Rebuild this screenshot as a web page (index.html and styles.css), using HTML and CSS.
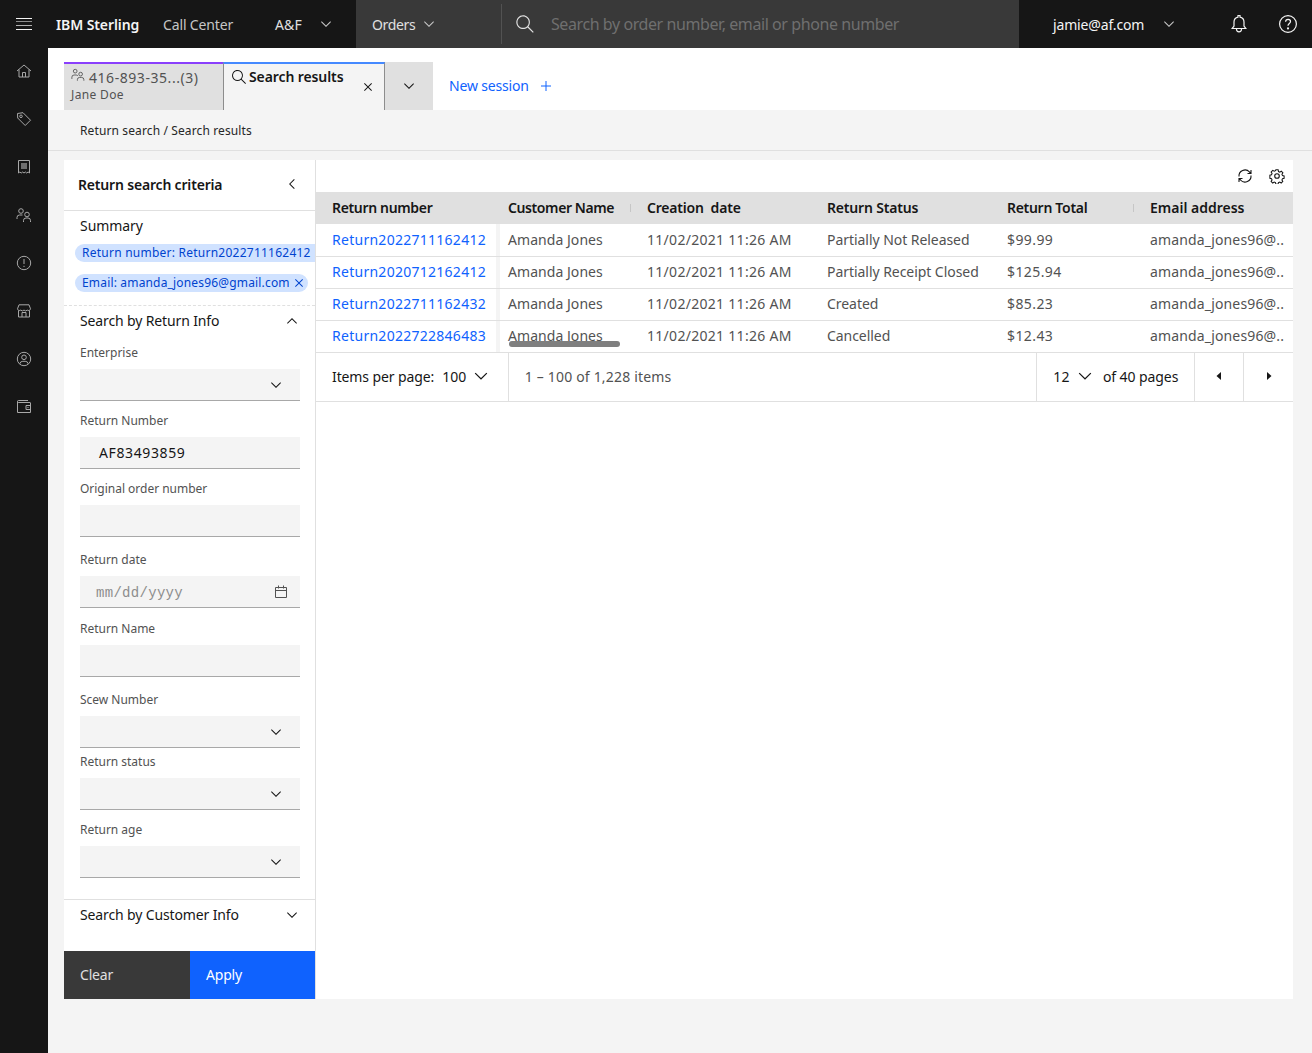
FILE: index.html
```html
<!DOCTYPE html>
<html lang="en">
<head>
<meta charset="utf-8">
<title>IBM Sterling Call Center</title>
<link rel="stylesheet" href="styles.css">
</head>
<body>
<svg class="defs" width="0" height="0" aria-hidden="true">
  <symbol id="chev" viewBox="0 0 16 16"><path d="M8 11L3 6 3.7 5.3 8 9.6 12.3 5.3 13 6z"/></symbol>
  <symbol id="close" viewBox="0 0 16 16"><path d="M12 4.7L11.3 4 8 7.3 4.7 4 4 4.7 7.3 8 4 11.3 4.7 12 8 8.7 11.3 12 12 11.3 8.7 8z"/></symbol>
  <symbol id="search" viewBox="0 0 16 16"><path d="M15,14.3L10.7,10c1.9-2.3,1.6-5.8-0.7-7.7S4.2,0.7,2.3,3S0.7,8.8,3,10.7c2,1.7,5,1.7,7,0l4.3,4.3L15,14.3z M2,6.5 C2,4,4,2,6.5,2S11,4,11,6.5S9,11,6.5,11S2,9,2,6.5z"/></symbol>
  <symbol id="people" viewBox="0 0 16 16"><g fill="none" stroke="currentColor"><circle cx="4.8" cy="3.6" r="2.1"/><path d="M1 12.500V10.500a2.500 2.500 0 0 1 2.500-2.500h2.400a2.500 2.500 0 0 1 2 1"/><circle cx="11" cy="7" r="2.100"/><path d="M7.300 14.500v-1.200a2.500 2.500 0 0 1 2.500-2.500h2.400a2.500 2.500 0 0 1 2.500 2.500v1.200"/></g></symbol>
</svg>

<header class="topbar">
  <button class="menu-btn" aria-label="Menu">
    <svg width="16" height="12" viewBox="0 0 16 12"><path d="M0 .5h16M0 11.500h16" stroke="#f4f4f4"/><path d="M0 3.500h16" stroke="#8d8d8d"/><path d="M0 7.500h16" stroke="#b0b0b0"/></svg>
  </button>
  <span class="brand">IBM Sterling</span>
  <span class="product">Call Center</span>
  <span class="tenant">A&amp;F</span>
  <svg class="ico tenant-chev"><use href="#chev"/></svg>
  <div class="search-zone">
    <span class="orders">Orders</span>
    <svg class="ico orders-chev"><use href="#chev"/></svg>
    <span class="search-div"></span>
    <svg class="ico-20 search-ico"><use href="#search"/></svg>
    <span class="search-ph">Search by order number, email or phone number</span>
  </div>
  <span class="user">jamie@af.com</span>
  <svg class="ico user-chev"><use href="#chev"/></svg>
  <svg class="bell" width="20" height="20" viewBox="0 0 20 20" fill="none" stroke="#f4f4f4" stroke-width="1.2"><path d="M3.200 14.500h13.600l-1.800-2.400V8a5 5 0 0 0-4-4.900V1.500h-2v1.600a5 5 0 0 0-4 4.900v4.100z"/><path d="M7.500 14.500v.8a2.500 2.500 0 0 0 5 0v-.8"/></svg>
  <svg class="help" width="20" height="20" viewBox="0 0 20 20" fill="none" stroke="#f4f4f4" stroke-width="1.2"><circle cx="10" cy="10" r="8.400"/><path d="M7.600 7.800c0-1.500 1.100-2.400 2.500-2.400s2.400.9 2.400 2.200c0 1.900-2.500 1.900-2.500 4.100"/><circle cx="10" cy="14.400" r=".5" fill="#f4f4f4"/></svg>
</header>

<div class="shell">
  <nav class="rail">
    <svg viewBox="0 0 16 16"><path d="M1 8l7-6 7 6M3 6.500V14h10V6.500M6.500 14V9.500h3V14"/></svg>
    <svg viewBox="0 0 16 16"><path d="M1.500 2.500l5.500-.8 7.500 7.500-5.300 5.300L1.700 7z"/><circle cx="5" cy="5.300" r="1.300"/></svg>
    <svg viewBox="0 0 16 16"><path d="M2.500 1.500h11V14l-1.400-1-1.400 1-1.350-1L8 14l-1.350-1-1.400 1-1.400-1-1.350 1z"/><path class="fill" d="M5 4h6v6H5z"/></svg>
    <svg viewBox="0 0 16 16"><circle cx="5" cy="4" r="2.300"/><path d="M1 12v-1.500A2.500 2.500 0 0 1 3.500 8h3"/><circle cx="11" cy="7.500" r="2.300"/><path d="M7.500 15v-1.500A2.500 2.500 0 0 1 10 11h2a2.500 2.500 0 0 1 2.500 2.500V15"/></svg>
    <svg viewBox="0 0 16 16"><circle cx="8" cy="8" r="6.700"/><path d="M8 4v5M8 10.800v1.200"/></svg>
    <svg viewBox="0 0 16 16"><path d="M3 1.800h10l1.500 4a2 2 0 0 1-3.250 1.300 2.300 2.300 0 0 1-3.250 0 2.300 2.300 0 0 1-3.250 0A2 2 0 0 1 1.500 5.800zM2.500 7.500v6.500h11V7.500M6 14V9.500h4V14"/></svg>
    <svg viewBox="0 0 16 16"><circle cx="8" cy="8" r="6.700"/><circle cx="8" cy="6.300" r="2.300"/><path d="M3.800 12.800a3 3 0 0 1 3-2.500h2.400a3 3 0 0 1 3 2.500"/></svg>
    <svg viewBox="0 0 16 16"><path d="M14 3.500H2.500a1 1 0 0 1 0-2H12M1.500 2.500v11h13v-10M14.500 6.500H10v4h4.500z"/><path d="M11.500 8.500h1"/></svg>
  </nav>

  <main class="main">
    <div class="tabs-band">
      <div class="tab tab-session">
        <div class="tab-line"><svg class="tab-people"><use href="#people"/></svg><span class="tab-phone">416-893-35...(3)</span></div>
        <div class="tab-sub">Jane Doe</div>
      </div>
      <div class="tab tab-active">
        <svg class="tab-search"><use href="#search"/></svg>
        <span class="tab-title">Search results</span>
        <svg class="ico tab-close"><use href="#close"/></svg>
      </div>
      <div class="tab-more"><svg class="ico"><use href="#chev"/></svg></div>
      <a class="new-session">New session</a>
      <svg class="plus" width="12" height="12" viewBox="0 0 12 12"><path d="M6 1v10M1 6h10" stroke="#0f62fe" stroke-width="1"/></svg>
    </div>
    <div class="crumbs">Return search / Search results</div>

    <div class="content">
      <aside class="panel">
        <div class="panel-form">
          <div class="panel-head"><h2>Return search criteria</h2><svg class="ico chev-left"><use href="#chev"/></svg></div>
          <div class="summary">
            <div class="summary-title">Summary</div>
            <div class="chip chip-long">Return number: Return2022711162412</div>
            <div class="chip chip-email">Email: amanda_jones96@gmail.com<svg class="chip-x"><use href="#close"/></svg></div>
          </div>
          <div class="acc-head acc-first"><span>Search by Return Info</span><svg class="ico chev-up"><use href="#chev"/></svg></div>
          <div class="fields">
            <div class="field"><label>Enterprise</label><div class="box"><svg class="ico"><use href="#chev"/></svg></div></div>
            <div class="field"><label>Return Number</label><div class="box box-value">AF83493859</div></div>
            <div class="field gap-15"><label>Original order number</label><div class="box"></div></div>
            <div class="field gap-13"><label>Return date</label><div class="box box-date"><span class="date-ph">mm/dd/yyyy</span>
              <svg width="16" height="16" viewBox="0 0 16 16" fill="none" stroke="#525252"><path d="M2.500 3.500h11v10h-11zM2.500 6.500h11M5.500 1.500v3M10.500 1.500v3"/></svg></div></div>
            <div class="field gap-15"><label>Return Name</label><div class="box"></div></div>
            <div class="field gap-6"><label>Scew Number</label><div class="box"><svg class="ico"><use href="#chev"/></svg></div></div>
            <div class="field"><label>Return status</label><div class="box"><svg class="ico"><use href="#chev"/></svg></div></div>
            <div class="field"><label>Return age</label><div class="box"><svg class="ico"><use href="#chev"/></svg></div></div>
          </div>
          <div class="acc-head acc-second"><span>Search by Customer Info</span><svg class="ico"><use href="#chev"/></svg></div>
        </div>
        <div class="actions"><button class="btn-clear">Clear</button><button class="btn-apply">Apply</button></div>
      </aside>

      <section class="results">
        <div class="toolbar">
          <svg width="16" height="16" viewBox="0 0 16 16" fill="none" stroke="#161616" stroke-width="1.100"><path d="M2 8.500a6 6 0 0 1 10.500-4.500L14 5.500M14 2v3.500h-3.500M14 7.500A6 6 0 0 1 3.500 12L2 10.500M2 14v-3.500h3.500"/></svg>
          <svg width="16" height="16" viewBox="0 0 16 16" fill="none" stroke="#161616" stroke-width="1.100"><circle cx="8" cy="8" r="2.300"/><path d="M6.800 1.500h2.400l.4 1.800 1.300.6 1.600-.9 1.700 1.700-1 1.500.6 1.400 1.700.4v2.400l-1.700.4-.6 1.300.9 1.600-1.700 1.700-1.500-1-1.400.6-.4 1.700H6.800l-.4-1.700-1.300-.6-1.600 1-1.700-1.700 1-1.600-.6-1.300-1.700-.4V7.100l1.700-.4.6-1.400-1-1.500 1.700-1.700 1.600.9 1.300-.6z" transform="translate(.4 .4) scale(.95)"/></svg>
        </div>
        <div class="table-wrap">
          <table>
            <colgroup><col class="c1"><col class="c2"><col class="c3"><col class="c4"><col class="c5"><col class="c6"></colgroup>
            <thead><tr><th class="frozen">Return number</th><th class="resize">Customer Name</th><th>Creation&nbsp; date</th><th>Return Status</th><th class="resize">Return Total</th><th>Email address</th></tr></thead>
            <tbody>
              <tr><td class="frozen"><a>Return2022711162412</a></td><td>Amanda Jones</td><td>11/02/2021 11:26 AM</td><td>Partially Not Released</td><td>$99.99</td><td>amanda_jones96@..</td></tr>
              <tr><td class="frozen"><a>Return2020712162412</a></td><td>Amanda Jones</td><td>11/02/2021 11:26 AM</td><td>Partially Receipt Closed</td><td>$125.94</td><td>amanda_jones96@..</td></tr>
              <tr><td class="frozen"><a>Return2022711162432</a></td><td>Amanda Jones</td><td>11/02/2021 11:26 AM</td><td>Created</td><td>$85.23</td><td>amanda_jones96@..</td></tr>
              <tr><td class="frozen"><a>Return2022722846483</a></td><td>Amanda Jones</td><td>11/02/2021 11:26 AM</td><td>Cancelled</td><td>$12.43</td><td>amanda_jones96@..</td></tr>
            </tbody>
          </table>
          <div class="scrollbar"></div>
        </div>
        <div class="pager">
          <div class="pg-size"><span>Items per page:</span><span class="pg-num">100</span><svg class="ico-20"><use href="#chev"/></svg></div>
          <div class="pg-range">1 – 100 of 1,228 items</div>
          <div class="pg-page"><span>12</span><svg class="ico-20"><use href="#chev"/></svg><span class="pg-of">of 40 pages</span></div>
          <div class="pg-arrow"><svg width="16" height="16" viewBox="0 0 16 16"><path d="M10 4v8L5.500 8z" fill="#161616"/></svg></div>
          <div class="pg-arrow"><svg width="16" height="16" viewBox="0 0 16 16"><path d="M6 4v8l4.500-4z" fill="#161616"/></svg></div>
        </div>
      </section>
    </div>
  </main>
</div>
</body>
</html>
```

FILE: styles.css
```css
* { box-sizing: border-box; }
html, body { margin: 0; height: 100%; }
body {
  width: 1312px; height: 1053px; overflow: hidden;
  background: #f4f4f4; color: #161616;
  font-family: "Noto Sans", "Liberation Sans", sans-serif; font-size: 14px;
}
button { font: inherit; border: 0; cursor: pointer; }
.defs { position: absolute; }
.ico { width: 16px; height: 16px; fill: #161616; flex: none; }
.ico-20 { width: 20px; height: 20px; flex: none; fill: #161616; }

/* top bar */
.topbar { height: 48px; background: #161616; color: #f4f4f4; display: flex; align-items: center; }
.menu-btn { width: 48px; height: 48px; background: none; display: flex; align-items: center; justify-content: center; padding: 0; }
.brand { width: 107px; margin-left: 8px; font-weight: 600; letter-spacing: -.1px; white-space: nowrap; }
.product { width: 112px; letter-spacing: -.14px; color: #c6c6c6; white-space: nowrap; }
.tenant { width: 43px; letter-spacing: .1px; color: #e0e0e0; }
.tenant-chev, .orders-chev, .user-chev { fill: #c6c6c6; }
.tenant-chev { margin-right: 22px; }
.search-zone { width: 663px; height: 48px; background: #393939; display: flex; align-items: center; padding-left: 16px; }
.orders { width: 49px; letter-spacing: -.33px; color: #e0e0e0; }
.orders-chev { margin-right: 64px; }
.search-div { width: 1px; height: 40px; background: #525252; margin-right: 13px; }
.search-ico { fill: #e0e0e0; margin-right: 16px; }
.search-ph { font-size: 16px; color: #6f6f6f; letter-spacing: -.42px; white-space: nowrap; }
.user { margin-left: 34px; width: 108px; letter-spacing: -.15px; color: #f4f4f4; white-space: nowrap; }
.user-chev { fill: #c6c6c6; margin-right: 52px; }
.bell { margin-right: 29px; flex: none; }
.help { flex: none; }

.shell { display: flex; height: 1005px; }

/* rail */
.rail { width: 48px; background: #161616; display: flex; flex-direction: column; align-items: center; padding-top: 14.500px; gap: 32px; flex: none; }
.rail svg { width: 16px; height: 16px; fill: none; stroke: #a8a8a8; stroke-width: 1; flex: none; }
.rail .fill { fill: #6f6f6f; stroke: none; }

.main { flex: 1; min-width: 0; display: flex; flex-direction: column; }

/* tabs */
.tabs-band { height: 62px; background: #fff; padding: 14px 0 0 16px; display: flex; align-items: flex-end; flex: none; }
.tab { height: 48px; flex: none; }
.tab-session { width: 159px; background: #e0e0e0; border-top: 2px solid #8a3ffc; padding: 4px 7px; color: #525252; }
.tab-line { display: flex; align-items: center; height: 18px; }
.tab-people { width: 14px; height: 14px; color: #525252; margin-right: 4px; transform: translateY(-2px); }
.tab-phone { letter-spacing: .55px; white-space: nowrap; }
.tab-sub { font-size: 12px; letter-spacing: .35px; margin-top: 1px; line-height: 16px; }
.tab-active { width: 162px; background: #f4f4f4; border-top: 2px solid #4589ff; border-left: 1px solid #8d8d8d; border-right: 1px solid #8d8d8d; padding: 3px 8px 0 7px; display: flex; align-items: flex-start; }
.tab-search { width: 16px; height: 16px; fill: #161616; margin: 2px 2px 0 0; flex: none; }
.tab-title { font-weight: 600; letter-spacing: -.1px; width: 112px; white-space: nowrap; line-height: 20px; }
.tab-close { margin-top: 12px; }
.tab-more { width: 48px; height: 48px; background: #e0e0e0; display: flex; align-items: center; justify-content: center; flex: none; }
.new-session { color: #0f62fe; margin-left: 16px; width: 92px; letter-spacing: -.18px; height: 48px; line-height: 48px; white-space: nowrap; }
.plus { margin-bottom: 18px; margin-left: -1px; }

.crumbs { height: 41px; padding: 13px 0 0 32px; font-size: 12px; letter-spacing: .12px; line-height: 16px; border-bottom: 1px solid #e0e0e0; flex: none; color: #262626; }

.content { display: flex; margin: 9px 0 0 16px; height: 839px; flex: none; }

/* panel */
.panel { width: 252px; background: #fff; border-right: 1px solid #e0e0e0; display: flex; flex-direction: column; flex: none; }
.panel-form { flex: 1; min-height: 0; }
.panel-head { height: 51px; border-bottom: 1px solid #e0e0e0; display: flex; align-items: center; justify-content: space-between; padding: 0 15px 2px 14px; }
.panel-head h2 { margin: 0; font-size: 14px; font-weight: 600; letter-spacing: -.18px; }
.chev-left { transform: rotate(90deg); }
.summary { height: 95px; padding: 7px 0 0; border-bottom: 1px dashed #e0e0e0; overflow: hidden; }
.summary-title { margin-left: 16px; line-height: 16px; letter-spacing: -.05px; }
.chip { height: 18px; margin: 12px 0 0 11px; width: max-content; padding: 0 1px 0 7px; background: #d0e2ff; color: #0043ce; border-radius: 9px; font-size: 12px; letter-spacing: .24px; line-height: 18px; display: flex; align-items: center; white-space: nowrap; }
.chip-long { margin-top: 10px; padding-right: 14px; }
.chip-email { letter-spacing: .17px; }
.chip-x { width: 16px; height: 16px; fill: #0043ce; margin-left: 1px; }
.acc-head { display: flex; justify-content: space-between; align-items: center; padding: 0 15px 0 16px; line-height: 16px; letter-spacing: -.13px; }
.acc-first { padding-top: 7px; height: 23px; }
.chev-up { transform: rotate(180deg); }
.fields { padding: 16px 15px 0 16px; height: 571px; border-bottom: 1px solid #e0e0e0; }
.field { margin-bottom: 12px; }
.field.gap-15 { margin-bottom: 15px; }
.field.gap-13 { margin-bottom: 13px; }
.field.gap-6 { margin-bottom: 6px; }
.field label { display: block; height: 16px; margin-bottom: 8px; font-size: 12px; line-height: 16px; letter-spacing: -.02px; color: #525252; }
.box { height: 32px; background: #f4f4f4; border-bottom: 1px solid #a8a8a8; display: flex; align-items: center; justify-content: flex-end; padding: 0 16px; }
.box-value { justify-content: flex-start; padding-left: 19px; letter-spacing: .62px; color: #161616; }
.box-date { justify-content: space-between; padding: 0 11px 0 16px; font-family: "Liberation Mono", monospace; font-size: 14px; letter-spacing: .3px; color: #8d8d8d; }
.date-ph { padding-top: 2px; }
.acc-second { height: 51px; padding-bottom: 21px; }
.actions { display: flex; height: 48px; flex: none; }
.actions button { height: 48px; text-align: left; padding: 0 16px 2px; letter-spacing: -.2px; }
.btn-clear { width: 126px; background: #393939; color: #e0e0e0; }
.btn-apply { width: 125px; background: #0f62fe; color: #fff; }

/* results */
.results { width: 977px; background: #fff; flex: none; display: flex; flex-direction: column; }
.toolbar { height: 32px; display: flex; justify-content: flex-end; align-items: center; gap: 16px; padding-right: 8px; }
.table-wrap { position: relative; }
table { width: 977px; border-collapse: separate; border-spacing: 0; table-layout: fixed; }
.c1 { width: 176px; } .c2 { width: 139px; } .c3 { width: 180px; } .c4 { width: 180px; } .c5 { width: 143px; } .c6 { width: 159px; }
th, td { padding: 0 0 0 16px; text-align: left; white-space: nowrap; overflow: hidden; }
th { height: 32px; padding-bottom: 2px; background: #e0e0e0; font-weight: 600; position: relative; }
th:nth-child(1) { letter-spacing: -.34px; }
th:nth-child(2) { letter-spacing: -.4px; }
th:nth-child(3) { letter-spacing: -.2px; }
th:nth-child(4) { letter-spacing: -.18px; }
th:nth-child(5) { letter-spacing: -.3px; }
th:nth-child(6) { letter-spacing: 0; }
td { height: 32px; padding-bottom: 2px; border-bottom: 1px solid #e0e0e0; color: #525252; }
tbody tr:first-child td { height: 33px; }
td:nth-child(2) { letter-spacing: .05px; }
td:nth-child(3) { letter-spacing: .29px; }
td:nth-child(4) { letter-spacing: -.05px; }
td:nth-child(5) { letter-spacing: .4px; }
td:nth-child(6) { letter-spacing: .15px; }
td a { color: #0f62fe; letter-spacing: .27px; }
td.frozen, th.frozen { overflow: visible; position: relative; }
.frozen::after { content: ""; position: absolute; top: 0; bottom: 0; left: 180px; width: 4px; background: #f4f4f4; }
th.frozen::after { background: #d0d0d0; }
th.resize::after { content: ""; position: absolute; right: 0; top: 12px; height: 8px; width: 1px; background: #c6c6c6; }
.scrollbar { position: absolute; left: 193px; top: 149px; width: 111px; height: 6px; border-radius: 3px; background: #7f7f7f; }

/* pager */
.pager { height: 49px; display: flex; align-items: stretch; border-bottom: 1px solid #e0e0e0; }
.pager > div { display: flex; align-items: center; padding-bottom: 2px; }
.pg-size { width: 193px; padding-left: 16px; border-right: 1px solid #e0e0e0; letter-spacing: -.11px; }
.pg-num { margin: 0 5px 0 8px; letter-spacing: .1px; }
.pg-range { width: 529px; padding-left: 16px; color: #525252; letter-spacing: .18px; border-right: 1px solid #e0e0e0; }
.pg-page { width: 158px; padding-left: 16px; border-right: 1px solid #e0e0e0; letter-spacing: .3px; }
.pg-page .ico-20 { margin: 0 8px 0 5px; }
.pg-of { letter-spacing: -.08px; }
.pg-arrow { width: 49px; justify-content: center; border-right: 1px solid #e0e0e0; }
.pg-arrow:last-child { border-right: 0; }
```
